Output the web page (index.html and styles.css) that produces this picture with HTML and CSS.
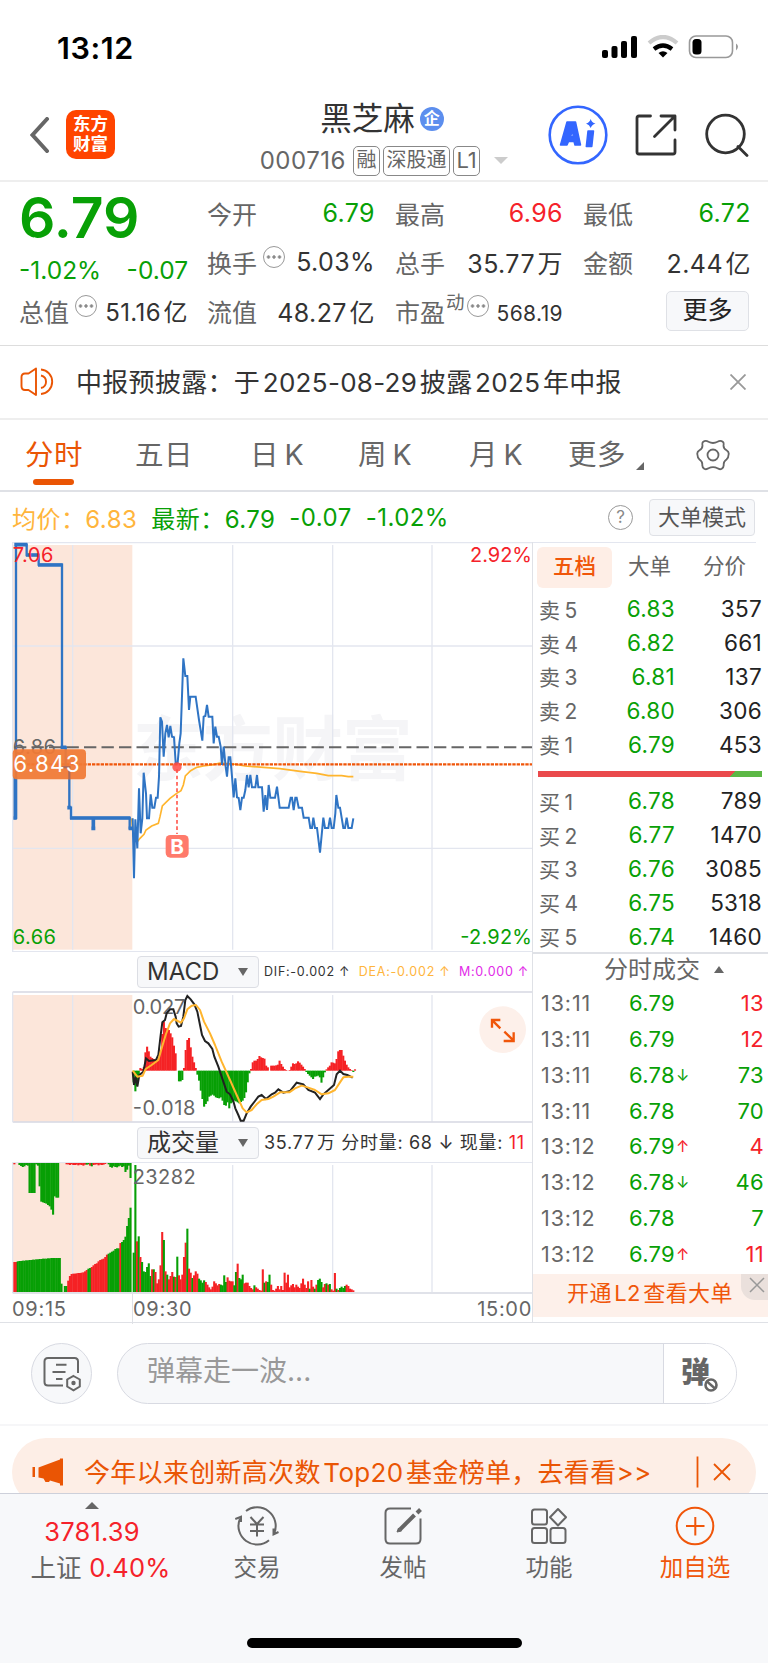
FILE: index.html
```html
<!DOCTYPE html>
<html lang="zh-cn">
<head>
<title>黑芝麻 000716</title>
<meta charset="utf-8">
<link rel="stylesheet" href="styles.css">
<script src="chart.js" defer></script>
</head>
<body>
<div id="wrap">

    <div class="status">
        <span class="time">13:12</span>
        <svg width="140" height="26" viewBox="0 0 140 26">
            <rect x="0" y="15" width="6" height="8" rx="2"/>
            <rect x="9.500" y="11" width="6" height="12" rx="2"/>
            <rect x="19" y="6" width="6" height="17" rx="2"/>
            <rect x="29" y="1" width="6" height="22" rx="2"/>
            <path d="M47 8 Q61 -4 75 8" fill="none" stroke="#ccc" stroke-width="4.200"/>
            <path d="M52 14 Q61 7 70 14" fill="none" stroke="#000" stroke-width="4.200"/>
            <path d="M61 22.500 L56.500 18 Q61 14.500 65.500 18 Z"/>
            <rect x="87.500" y="1" width="43" height="21.500" rx="6.500" fill="none" stroke="#999" stroke-width="1.600"/>
            <rect x="90.500" y="4" width="9" height="15.500" rx="3.500"/>
            <path d="M134 8.500 Q138 11.500 134 15.500Z" fill="#999"/>
        </svg>
    </div>

    <div class="head">
        <div class="head-left">
            <svg width="20" height="36" viewBox="0 0 20 36"><path d="M17 2 L2.500 18 L17 34" fill="none" stroke="#666" stroke-width="4" stroke-linecap="round"/></svg>
            <div class="logo">东方<br>财富</div>
        </div>
        <div class="head-mid">
            <h1>黑芝麻<i>企</i></h1>
            <p><span class="code">000716</span><b>融</b><b>深股通</b><b>L1</b><em></em></p>
        </div>
        <div class="head-right">
            <svg width="60" height="60" viewBox="0 0 60 60">
                <circle cx="30" cy="30" r="28.300" fill="none" stroke="#36f" stroke-width="2.600"/>
                <path fill="#36f" stroke="#36f" stroke-width="1.500" stroke-linejoin="round" fill-rule="evenodd" d="M19 17 H27.500 L32.500 40 H27 L26 36.500 H20.500 L19 40 H12.500Z M22.500 31.500 H25.300 L24.500 25.500Z"/>
                <path fill="#36f" stroke="#36f" stroke-width="1.500" stroke-linejoin="round" d="M40 26 H45.500 L43.800 41.500 H38.300Z"/>
                <path fill="#36f" d="M42.700 14 Q43.800 17.600 47.500 18.500 Q43.800 19.500 42.700 23 Q41.500 19.500 38 18.500 Q41.500 17.600 42.700 14Z"/>
            </svg>
            <svg class="share" width="42" height="42" viewBox="0 0 42 42" fill="none" stroke="#333" stroke-width="2.800" stroke-linecap="round" stroke-linejoin="round">
                <path d="M15.500 2 H4 Q2 2 2 4 V38 Q2 40 4 40 H38 Q40 40 40 38 V26 M26 2 H40 V16 M39 3 L19.500 22.500"/>
            </svg>
            <svg width="44" height="44" viewBox="0 0 44 44" fill="none" stroke="#333" stroke-width="2.800" stroke-linecap="round">
                <circle cx="20.500" cy="21" r="18.800"/><path d="M33 33.500 L42 42.500"/>
            </svg>
        </div>
    </div>

    <div class="quote">
        <div class="now">
            <strong>6.79</strong>
            <p class="green"><span>-1.02%</span><span>-0.07</span></p>
            <p class="total"><label>总值</label><i class="dots"></i><span>51.16&hairsp;亿</span></p>
        </div>
        <ul>
            <li><label>今开</label><span class="green">6.79</span></li>
            <li><label>换手</label><i class="dots"></i><span>5.03%</span></li>
            <li><label>流值</label><span>48.27&hairsp;亿</span></li>
        </ul>
        <ul>
            <li><label>最高</label><span class="red">6.96</span></li>
            <li><label>总手</label><span>35.77&hairsp;万</span></li>
            <li><label>市盈</label><sup>动</sup><i class="dots near"></i><span class="small">568.19</span></li>
        </ul>
        <ul>
            <li><label>最低</label><span class="green">6.72</span></li>
            <li><label>金额</label><span>2.44&hairsp;亿</span></li>
            <li><a class="more">更多</a></li>
        </ul>
    </div>

    <div class="notice">
        <svg width="36" height="30" viewBox="0 0 36 30" fill="none" stroke="#ea5504" stroke-width="1.900" stroke-linejoin="round">
            <path d="M16 1.500 L8.500 6.500 H5 Q1.500 6.500 1.500 10 V19 Q1.500 23 5 23 H8.500 L16 28 Z"/>
            <path d="M21 2.500 A12.300 12.300 0 0 1 21 27 M21 8.500 A6.400 6.400 0 0 1 21 21"/>
        </svg>
        <p>中报预披露：于&hairsp;2025-08-29&hairsp;披露&hairsp;2025&hairsp;年中报</p>
        <svg width="16" height="16" viewBox="0 0 16 16" stroke="#999" stroke-width="1.800"><path d="M.5 .5 L15.500 15.500 M15.500 .5 L.5 15.500"/></svg>
    </div>

    <div class="tabs">
        <a class="active">分时</a>
        <a>五日</a>
        <a>日&thinsp;K</a>
        <a>周&thinsp;K</a>
        <a>月&thinsp;K</a>
        <a class="drop">更多</a>
        <svg width="34" height="34" viewBox="-17 -17 34 34" fill="none" stroke="#666" stroke-width="1.800" stroke-linejoin="round">
            <path d="M-4.500 -13.200 Q0 -10.800 4.500 -13.200 Q7.500 -15 10 -13 Q11 -12.200 10.500 -9.500 Q10.500 -6.500 13.500 -4.800 Q16.500 -3 15.500 0 Q15.500 3 13.500 4.500 Q10.500 6.500 10.700 9.500 Q11 12.500 8.500 14 Q6.500 14.800 4.500 13.300 Q0 11 -4.500 13.300 Q-6.500 14.800 -8.500 14 Q-11 12.500 -10.700 9.500 Q-10.500 6.500 -13.500 4.500 Q-15.500 3 -15.500 0 Q-16.500 -3 -13.500 -4.800 Q-10.500 -6.500 -10.500 -9.500 Q-11 -12.200 -10 -13 Q-7.500 -15 -4.500 -13.200Z"/>
            <circle r="5.500"/>
        </svg>
    </div>

    <div class="info">
        <span class="avg">均价：6.83</span>
        <span class="green">最新：6.79</span>
        <span class="green">-0.07</span>
        <span class="green">-1.02%</span>
        <i class="ask">?</i>
        <a class="mode">大单模式</a>
    </div>

    <div class="main">
        <div class="charts">
            <!-- 所有图表按3倍坐标绘制 -->
            <svg class="price" viewBox="0 36 1599 1230" width="533" height="410">
                <rect x="38" y="45" width="359" height="1214" fill="#fce6da"/>
                <text class="mark" x="398" y="735" textLength="840">东方财富</text>
                <path class="grid" d="M218 45V1259 M698 45V1259 M998 45V1259 M1296 45V1259 M38 348H1599 M38 955H1599"/>
                <path class="grid" d="M38 38H1599 M38 36V1266 M38 1265H1599"/>
                <path d="M42 652H1599" stroke="#666" stroke-width="6" stroke-dasharray="37 15.500"/>
                <polyline fill="none" stroke="#ffb52e" stroke-width="5" points="395,865 400,920 412,935 420,925 432,913 438,900 455,888 475,880 480,860 487,828 510,805 530,790 543,782 550,765 556,738 572,722 590,712 610,708 640,704 660,699 700,702 735,708 790,712 840,716 900,724 950,730 985,737 1025,737 1045,740 1060,740"/>
                <path d="M42 703H1599" stroke="#f0560a" stroke-width="7" stroke-dasharray="10 3"/>
                <path d="M42 864H48V44H80V75H116V104H186V652H197V712H208V833H213V864H280V895V864H389V895H395" fill="none" stroke="#2f74c4" stroke-width="7"/>
                <path d="M43 44H82 M78 75H118 M114 105H188 M182 652H199 M192 712H208 M202 833H214 M210 864H391 M280 864V898 M274 895H286 M386 895H397 M46 740V866 M40 864H50" fill="none" stroke="#2f74c4" stroke-width="11"/>
                <polyline fill="none" stroke="#2f74c4" stroke-width="6" points="398,865 402,1045 406,868 412,955 417,775 422,910 427,865 431,728 438,790 441,865 447,865 452,793 457,833 463,833 468,803 473,803 477,740 481,562 486,575 491,680 496,610 501,585 506,622 511,588 516,620 522,622 527,698 533,698 538,640 542,610 550,385 556,438 562,438 567,540 571,500 587,500 597,570 607,632 611,560 616,558 621,525 626,560 637,560 641,640 646,590 651,620 656,620 662,650 666,705 671,650 677,710 681,740 686,682 691,682 696,740 701,802 706,745 711,802 716,804 721,840 726,803 731,803 736,780 741,735 746,772 751,735 756,772 766,772 771,735 775,772 786,772 791,845 796,795 801,840 806,765 811,803 825,803 831,770 839,833 866,833 872,803 876,803 881,840 886,803 890,803 896,833 906,833 911,863 926,863 931,894 936,894 940,863 945,894 951,894 960,968 970,863 975,894 985,894 990,863 995,894 1001,894 1006,850 1009,795 1015,833 1020,833 1030,894 1035,894 1040,863 1045,894 1055,894 1060,865"/>
                <text x="38" y="97" fill="#f5222a" textLength="122">7.06</text>
                <text x="1596" y="97" fill="#f5222a" text-anchor="end" textLength="186">2.92%</text>
                <text x="38" y="671" fill="#666" textLength="130">6.86</text>
                <text x="38" y="1242" fill="#08a006" textLength="130">6.66</text>
                <text x="1596" y="1242" fill="#08a006" text-anchor="end" textLength="215">-2.92%</text>
                <rect x="38" y="658" width="220" height="90" rx="12" fill="#f07a36" fill-opacity=".94"/>
                <path d="M186 712H208V748" fill="none" stroke="#a86a5c" stroke-width="6"/>
                <text class="tag" x="40" y="726" textLength="199">6.843</text>
                <path d="M531 718V912" stroke="#ff5a50" stroke-width="5" stroke-dasharray="11 8"/>
                <circle cx="531" cy="711" r="14" fill="#ff4a44" fill-opacity=".85"/>
                <rect x="497" y="915" width="69" height="68" rx="14" fill="#ff7a6b"/>
                <text class="buy" x="531.500" y="972" text-anchor="middle">B</text>
            </svg>

            <div class="bar">
                <a>MACD</a>
                <p class="macd"><span>DIF:-0.002 ↑</span><span class="dea">DEA:-0.002 ↑</span><span class="m">M:0.000 ↑</span></p>
            </div>
            <svg id="macd" viewBox="0 138 1599 396" width="533" height="132">
                <rect x="38" y="150" width="359" height="380" fill="#fce6da"/>
                <path class="grid" d="M218 150V530 M698 150V530 M998 150V530 M1296 150V530"/>
                <path class="grid dark" d="M38 141H1599 M38 531H1599"/><path class="grid" d="M38 141V531"/>
                <g id="macdBars"></g>
                <text x="398" y="208" fill="#666" textLength="158">0.027</text>
                <text x="398" y="509" fill="#666" textLength="188">-0.018</text>
                <polyline fill="none" stroke="#222" stroke-width="6" points="398,380 402,420 407,395 412,425 418,390 430,380 438,340 447,348 468,345 475,330 482,270 487,232 495,225 500,205 510,193 520,193 527,215 530,235 536,245 543,243 550,215 556,165 562,153 572,163 583,178 592,200 600,240 606,270 615,288 625,295 637,312 643,335 655,365 665,395 680,440 690,448 700,468 706,490 715,510 722,527 731,527 740,505 752,485 765,468 775,455 785,450 798,462 815,448 825,443 835,433 850,443 870,438 890,413 910,418 925,435 945,443 960,462 970,448 985,435 1002,420 1010,388 1020,377 1030,387 1042,390 1058,398"/>
                <polyline fill="none" stroke="#ffb52e" stroke-width="6" stroke-linejoin="round" points="398,377 412,395 428,392 437,372 455,360 475,345 485,310 497,270 510,235 522,222 533,228 543,233 552,220 562,193 575,182 588,180 600,195 612,230 630,265 645,300 665,350 690,405 710,450 728,490 740,502 755,495 770,478 785,465 805,462 820,455 840,442 868,442 885,430 905,422 925,428 945,435 965,448 985,445 1005,435 1018,415 1030,397 1045,395 1060,395"/>
                <circle cx="1508" cy="254" r="70" fill="#fdf0ea"/>
                <path d="M1476 248V225H1501 M1477 226L1501 250 M1541 262V288H1511 M1540 286L1513 260" fill="none" stroke="#f0560a" stroke-width="7"/>
            </svg>

            <div class="bar">
                <a>成交量</a>
                <p>35.77&hairsp;万 分时量: 68 ↓ 现量: <span class="red">11</span></p>
            </div>
            <svg id="volume" viewBox="0 651 1599 396" width="533" height="132">
                <rect x="38" y="654" width="357" height="388" fill="#fce6da"/>
                <path class="grid" d="M218 660V1041 M698 660V1041 M998 660V1041 M1296 660V1041"/>
                <path class="grid" d="M38 652H1599 M38 652V1044"/><path class="grid dark" d="M38 1044H1599"/>
                <g id="volumeBars"></g>
                <text x="398" y="718" fill="#666" textLength="189">23282</text>
            </svg>
            <div class="axis"><span>09:15</span><span>09:30</span><span>15:00</span></div>
        </div>

        <div class="side">
            <div class="side-tabs"><a class="active">五档</a><a>大单</a><a>分价</a></div>
            <ul class="level">
                <li><label>卖&thinsp;5</label><b>6.83</b><span>357</span></li>
                <li><label>卖&thinsp;4</label><b>6.82</b><span>661</span></li>
                <li><label>卖&thinsp;3</label><b>6.81</b><span>137</span></li>
                <li><label>卖&thinsp;2</label><b>6.80</b><span>306</span></li>
                <li><label>卖&thinsp;1</label><b>6.79</b><span>453</span></li>
            </ul>
            <div class="ratio"></div>
            <ul class="level">
                <li><label>买&thinsp;1</label><b>6.78</b><span>789</span></li>
                <li><label>买&thinsp;2</label><b>6.77</b><span>1470</span></li>
                <li><label>买&thinsp;3</label><b>6.76</b><span>3085</span></li>
                <li><label>买&thinsp;4</label><b>6.75</b><span>5318</span></li>
                <li><label>买&thinsp;5</label><b>6.74</b><span>1460</span></li>
            </ul>
            <h2>分时成交<i></i></h2>
            <ul class="deal">
                <li><label>13:11</label><b>6.79</b><i></i><span class="red">13</span></li>
                <li><label>13:11</label><b>6.79</b><i></i><span class="red">12</span></li>
                <li><label>13:11</label><b>6.78</b><i>↓</i><span>73</span></li>
                <li><label>13:11</label><b>6.78</b><i></i><span>70</span></li>
                <li><label>13:12</label><b>6.79</b><i class="red">↑</i><span class="red">4</span></li>
                <li><label>13:12</label><b>6.78</b><i>↓</i><span>46</span></li>
                <li><label>13:12</label><b>6.78</b><i></i><span>7</span></li>
                <li><label>13:12</label><b>6.79</b><i class="red">↑</i><span class="red">11</span></li>
            </ul>
            <div class="promo">开通&hairsp;L2&hairsp;查看大单
                <i><svg width="16" height="16" viewBox="0 0 16 16" stroke="#999" stroke-width="1.500"><path d="M1 1 L15 15 M15 1 L1 15"/></svg></i>
            </div>
        </div>
    </div>

    <div class="danmu">
        <div class="set">
            <svg width="38" height="36" viewBox="0 0 38 36" fill="none" stroke="#666" stroke-width="2">
                <path d="M20 29.500 H5 Q1.500 29.500 1.500 26 V5.500 Q1.500 2 5 2 H31.500 Q35 2 35 5.500 V17 M13 8.800 H23.500 M9.500 16 H22.500 M13 23 H19.500"/>
                <path d="M30.500 20 L36.800 23.500 V30.500 L30.500 34.300 L24.200 30.500 V23.500Z"/><circle cx="30.500" cy="27" r="1.200" fill="#666"/>
            </svg>
        </div>
        <div class="input"><span>弹幕走一波...</span>
            <a>弹<svg width="16" height="16" viewBox="0 0 16 16"><circle cx="8" cy="8" r="8" fill="#fff"/><circle cx="8" cy="8" r="5.500" fill="none" stroke="#666" stroke-width="2.600"/><path d="M4 4.500L12 11.500" stroke="#666" stroke-width="2.400"/></svg></a>
        </div>
    </div>

    <div class="ad">
        <div>
            <svg width="32" height="28" viewBox="0 0 32 28" fill="#ea5504"><path d="M.5 9H3V19H.5Z M6.500 9.500 L28 1.500 V0.500 H31 V27.500 H28 V25.500 L18 22.500 L17 24 H13.500 L11.500 20.500 L6.500 19.500Z"/></svg>
            <p>今年以来创新高次数&hairsp;Top20&hairsp;基金榜单，去看看&gt;&gt;</p>
            <svg width="36" height="32" viewBox="0 0 36 32" stroke="#ea5504" stroke-width="1.800"><path d="M1.500 .5V31.500 M18 8 L34 24 M34 8 L18 24"/></svg>
        </div>
    </div>

    <div class="foot">
        <div class="index">
            <i></i>
            <p class="red">3781.39</p>
            <p>上证 <span class="red">0.40%</span></p>
        </div>
        <a>
            <svg width="44" height="40" viewBox="0 0 44 40" fill="none" stroke="#666" stroke-width="2">
                <path d="M11 5 A18.600 18.600 0 0 1 39.300 27 M38.500 22.500 V28.500 L43.500 26"/>
                <path d="M34 34.200 A18.600 18.600 0 0 1 4.800 13 M.3 13 L6 10.800 V16"/>
                <path d="M15.500 11 L22 18 L28.500 11 M22 18 V30.500 M15 18.500 H29 M15 25 H29"/>
            </svg>
            交易
        </a>
        <a>
            <svg width="40" height="40" viewBox="0 0 40 40" fill="none" stroke="#666" stroke-width="2">
                <path d="M28 2.500 H7 Q2.500 2.500 2.500 7 V33 Q2.500 37.500 7 37.500 H33 Q37.500 37.500 37.500 33 V12.500"/>
                <path d="M17 23.500 L31.500 9" stroke-width="4"/><path d="M14 26 L15.500 22 L18.500 25Z" fill="#666" stroke-width="1"/>
                <path d="M34 7 L37.500 3.500" stroke-width="4"/>
            </svg>
            发帖
        </a>
        <a>
            <svg width="40" height="40" viewBox="0 0 40 40" fill="none" stroke="#666" stroke-width="2" stroke-linejoin="round">
                <rect x="3" y="3.500" width="15" height="15" rx="2.500"/><rect x="3" y="22" width="15" height="15" rx="2.500"/><rect x="21.500" y="22" width="15" height="15" rx="2.500"/>
                <path d="M29 3 L37 11.300 L29 19.500 L21 11.300Z"/>
            </svg>
            功能
        </a>
        <a class="add">
            <svg width="40" height="40" viewBox="0 0 40 40" fill="none" stroke="#f0560a" stroke-width="2"><circle cx="20" cy="20" r="18.300"/><path d="M11 20H29.500 M20.300 11V29.500"/></svg>
            加自选
        </a>
        <div class="home"></div>
    </div>

</div>
</body>
</html>
```
FILE: styles.css
```css
body,ul,h1,h2,p{margin: 0;padding: 0;}
body{background: #fff;color: #333;font-family: Inter,"Noto Sans CJK SC",sans-serif;}
li{list-style: none;}
i,em{font-style: normal;}
b,h1,h2{font-weight: normal;}
svg{display: block;flex: none;}
.red{color: #f5222a !important;}
.green{color: #08a006 !important;}
#wrap{width: 768px;height: 1663px;overflow: hidden;}

.status{height: 95px;box-sizing: border-box;padding: 35px 26px 0 57px;display: flex;justify-content: space-between;}
.status .time{font-size: 30.500px;line-height: 25px;font-weight: 600;color: #000;letter-spacing: .6px;}

.head{height: 87px;display: grid;grid-template-columns: 1fr auto 1fr;border-bottom: 2px solid #eee;box-sizing: border-box;}
.head-left{display: flex;align-items: center;padding: 0 0 6px 30px;}
.logo{width: 49px;height: 49px;border-radius: 10px;background: #ff4400;color: #fff;font-size: 17.500px;line-height: 20px;font-weight: bold;text-align: center;margin-left: 16px;padding-top: 4px;box-sizing: border-box;}
.head-mid{text-align: center;}
.head-mid h1{font-size: 31.500px;line-height: 44px;padding: 2px 4px 0 0;display: flex;justify-content: center;align-items: center;}
.head-mid h1 i{width: 24px;height: 24px;line-height: 23px;border-radius: 50%;background: #5c8eee;color: #fff;font-size: 16px;font-weight: bold;margin-left: 5px;}
.head-mid p{display: flex;align-items: center;font-size: 20px;color: #666;height: 31px;margin-top: 4px;}
.head-mid .code{font-size: 24px;margin-right: 7px;letter-spacing: .5px;}
.head-mid b{border: 1.500px solid #888;border-radius: 5px;height: 28px;line-height: 27px;padding: 0 2.500px;margin-right: 3px;}
.head-mid b:nth-of-type(3){font-size: 22px;}
.head-mid em{border: 7px solid transparent;border-top-color: #ccc;border-bottom: 0;margin-left: 11px;}
.head-right{display: flex;align-items: center;justify-content: flex-end;padding: 0 19px 6px 0;}
.head-right .share{margin: 0 28px 0 27px;}

.quote{height: 164px;box-sizing: border-box;display: flex;gap: 20px;padding: 6px 15px 0 19px;border-bottom: 1px solid #ddd;font-size: 25px;}
.quote ul,.now{width: 168px;flex: none;}
.now{width: 169px;}
.now strong{display: block;font-size: 57px;line-height: 60px;font-weight: 600;color: #08a006;}
.now .green{display: flex;justify-content: space-between;font-size: 24.500px;line-height: 36px;margin-top: 4px;}
.quote li,.now .total{height: 49px;display: flex;align-items: center;}
.now .total{margin-top: -2px;}
.quote label{color: #666;}
.quote ul{margin-left: -1px;margin-right: 1px;}
.quote li span,.total span{margin-left: auto;white-space: nowrap;letter-spacing: .4px;}
.total span{font-size: 24px;}
.quote .small{font-size: 21px;padding-top: 5px;}
.quote sup{font-size: 18.500px;line-height: 18px;color: #666;margin: -18px 0 0 1px;}
.dots{width: 22px;height: 22px;border: 1.500px solid #999;border-radius: 50%;margin: -10px 0 0 6px;flex: none;background: radial-gradient(circle,#888 1.300px,transparent 1.800px) center/5.500px 5.500px repeat-x;background-clip: content-box;box-sizing: border-box;padding: 0 2px;}
.dots.near{margin-left: 2px;}
.quote .more{width: 81px;height: 38px;border: 1px solid #dfe1e6;border-radius: 5px;background: #f7f8fa;text-align: center;line-height: 36px;margin-left: auto;margin-right: 2px;color: #222;}

.notice{height: 74px;box-sizing: border-box;border-bottom: 2px solid #eee;display: flex;align-items: center;padding: 0 22px 0 20px;font-size: 26px;}
.notice p{flex: 1;margin: -3px 0 0 20px;white-space: nowrap;letter-spacing: .3px;}

.tabs{height: 72px;box-sizing: border-box;border-bottom: 2px solid #dfe1e6;padding-left: 25px;display: grid;grid-template-columns: 110px 115px 108px 111px 99px 128px auto;align-items: center;justify-items: start;font-size: 28.500px;color: #666;}
.tabs a{line-height: 70px;height: 70px;letter-spacing: .4px;}
.tabs .active{color: #ea5504;}
.tabs .active:after{content: "";display: block;width: 41px;height: 6px;border-radius: 3px;background: #ea5504;margin: -11px auto 0;}
.tabs .drop:after{content: "";display: inline-block;border: 4px solid #666;border-left-color: transparent;border-top-color: transparent;margin-left: 10px;vertical-align: -5px;}

.info{height: 50px;box-sizing: border-box;display: flex;align-items: center;padding: 0 13px 0 12px;font-size: 24px;}
.info .avg{color: #ffb53c;}
.info span{margin-right: 14px;letter-spacing: .45px;}
.ask{margin-left: auto;width: 25px;height: 25px;line-height: 23px;box-sizing: border-box;border: 1.500px solid #999;border-radius: 50%;text-align: center;font-size: 17px;color: #888;}
.mode{width: 104px;height: 35px;line-height: 34px;border: 1px solid #dfe1e6;border-radius: 4px;background: #f7f8fa;font-size: 22px;text-align: center;margin-left: 16px;color: #555;}

.main{height: 781px;display: flex;border-bottom: 1px solid #dfe1e6;box-sizing: border-box;}
.charts{width: 532px;flex: none;}
.charts text{font-size: 60px;}
.charts .mark{font-size: 212px;font-weight: bold;fill: #f5f5f7;}
.charts .tag{font-size: 67px;fill: #fff;}
.charts .buy{font-size: 62px;font-weight: bold;fill: #fff;}
.grid{stroke: #e3e6ef;stroke-width: 4;fill: none;}
.grid.dark{stroke: #d6d8e2;}
.r{fill: #f52225;}
.g{fill: #079f05;}
.bar{height: 39px;display: flex;align-items: center;padding-left: 137px;}
.bar a{width: 111px;height: 30px;line-height: 30px;border: 1px solid #dcdee4;border-radius: 4px;background: #f7f8fa;font-size: 24px;padding-left: 9px;margin-right: 5px;display: flex;justify-content: space-between;}
.bar a:after{content: "";border: 5px solid transparent;border-top: 8px solid #666;border-bottom: 0;margin: 11px 10px 0 0;}
.bar p{font-size: 18px;white-space: nowrap;letter-spacing: .68px;margin-top: -3px;}
.bar .macd{font-size: 12.500px;flex: 1;display: flex;justify-content: space-between;padding-right: 3px;letter-spacing: .75px;margin-top: 0;}
.bar .dea{color: #ffb53c;}
.bar .m{color: #e22be8;}
.axis{height: 28px;line-height: 30px;display: grid;grid-template-columns: 120px 1fr auto;padding: 0 0 0 12px;font-size: 20px;letter-spacing: .7px;color: #666;}
.axis span:nth-child(2){border-left: 1px solid #dfe1e6;}

.side{flex: 1;border-left: 1px solid #dfe1e6;position: relative;box-sizing: border-box;}
.side-tabs{display: grid;grid-template-columns: repeat(3,75px);height: 47px;padding: 4px 0 0 4px;width: 223px;border-top: 1px solid #e3e6ef;box-sizing: border-box;font-size: 21.500px;color: #666;text-align: center;line-height: 39px;}
.side-tabs .active{height: 41px;background: #feeee6;border-radius: 6px;color: #f0560a;font-weight: 500;}
.level{padding: 3px 6px 0;}
.level li{height: 33.800px;display: grid;grid-template-columns: 61px 75px 1fr;align-items: center;font-size: 22.500px;letter-spacing: .3px;text-align: right;}
.level label{font-size: 21px;text-align: left;color: #666;}
.level b{color: #08a006;}
.level span{color: #222;}
.ratio{height: 6px;margin: 10px 6px 4px 5px;background: linear-gradient(135deg,#ea4a4c 86%,#5cb845 86%);}
.side h2{height: 36px;border-top: 2px solid #dfe1e6;font-size: 24px;line-height: 32px;padding-left: 71px;color: #666;box-sizing: border-box;margin-top: -1px;}
.side h2 i{display: inline-block;border: 5px solid transparent;border-bottom: 7px solid #666;border-top: 0;margin-left: 14px;vertical-align: 5px;}
.deal{padding: 0 4px 0 8px;height: 289px;margin-top: -3px;}
.deal li{height: 35.900px;display: grid;grid-template-columns: 88px 47px 20px 1fr;align-items: center;font-size: 22px;color: #08a006;letter-spacing: .3px;}
.deal label{color: #666;font-size: 21.500px;letter-spacing: .9px;}
.deal i{font-size: 16px;}
.deal span{text-align: right;}
.promo{height: 43px;line-height: 38px;background: #fdf0ea;color: #f0560a;font-size: 22px;letter-spacing: .4px;padding-left: 34px;position: relative;}
.promo i{position: absolute;right: 0;top: 0;width: 27px;height: 26px;background: #eae0dc;border-bottom-left-radius: 14px;}
.promo i svg{margin: 3px 0 0 8px;}

.danmu{height: 103px;box-sizing: border-box;border-bottom: 2px solid #f6f6f8;display: flex;padding: 20px 31px 0;gap: 25px;}
.set{width: 61px;height: 61px;box-sizing: border-box;border: 1px solid #d8dae2;border-radius: 50%;background: #f7f8fa;display: flex;align-items: center;justify-content: center;}
.input{flex: 1;height: 61px;box-sizing: border-box;border: 1px solid #d8dae2;border-radius: 31px;background: #f7f8fa;overflow: hidden;display: flex;justify-content: space-between;padding-left: 29px;font-size: 28px;line-height: 55px;color: #999;}
.input a{width: 73px;border-left: 1px solid #d8dae2;background: #fff;color: #666;font-weight: 900;font-size: 29px;line-height: 58px;padding-left: 17px;box-sizing: border-box;position: relative;}
.input a svg{position: absolute;left: 39px;top: 33px;}

.ad{height: 67px;overflow: hidden;padding: 12px 12px 0;box-sizing: border-box;}
.ad div{height: 68px;border-radius: 34px;background: #fdeee6;display: flex;align-items: center;padding: 0 24px 0 20px;font-size: 26px;color: #ea5504;box-sizing: border-box;}
.ad p{flex: 1;margin: -4px 0 0 20px;white-space: nowrap;letter-spacing: .3px;}

.foot{height: 172px;border-top: 1px solid #cdd0da;background: #f7f8fa;display: grid;grid-template-columns: 184px repeat(4,146px);box-sizing: border-box;position: relative;color: #666;font-size: 23.500px;text-align: center;}
.foot a svg{margin: 12px auto 1px;}
.foot a{line-height: 42px;}
.foot .add{color: #f0560a;}
.index i{display: block;width: 0;border: 7px solid transparent;border-bottom-color: #666;border-top: 0;margin: 8px auto 5px;}
.index p{line-height: 36px;font-size: 25.500px;letter-spacing: .2px;}
.index p + p{padding-left: 17px;}
.home{position: absolute;left: 247px;bottom: 17px;width: 275px;height: 10px;border-radius: 5px;background: #000;}
```
FILE: chart.js
```js
// 正数红柱，负数绿柱
function drawBars(id, list, x, step, base, dir){
    var html = '';
    for(var i=0;i<list.length;i++){
        if(!list[i]) continue;
        var h = Math.abs(list[i]);
        var y = dir == 'down' ? base : base - h;
        if(dir == 'both') y = list[i] > 0 ? base - h : base;
        html += '<rect class="' + (list[i] > 0 ? 'r' : 'g') + '" x="' + (x + i*step) + '" y="' + y + '" width="' + (step + 1.2) + '" height="' + h + '"/>';
    }
    document.getElementById(id).innerHTML += html;
}

var macd = [-35,-62,-45,-20,8,5,10,55,72,58,42,38,35,32,34,40,60,110,147,128,126,122,112,100,75,52,0,-32,-32,-28,8,62,92,98,70,42,25,8,-12,-30,-60,-85,-108,-100,-92,-78,-75,-72,-75,-80,-82,-83,-80,-90,-103,-105,-95,-113,-98,-95,-90,-92,-95,-98,-94,-90,-82,-65,-35,-8,5,25,30,30,35,44,40,38,36,15,10,0,15,15,15,16,18,30,20,12,5,2,0,2,12,22,20,22,28,24,18,12,5,-4,-10,-15,-20,-25,-18,-17,-15,-20,-36,-20,-5,4,10,15,25,24,22,35,58,62,62,45,30,18,10,5,2,-4,4];

var pre = [90,90,-92,-93,-93,-94,-94,-95,-95,-96,-96,-97,-97,-98,-98,-99,-99,-100,-100,-100,-101,-101,-102,-102,-102,-102,-102,-102,-25,0,-18,-18,34,48,54,55,55,56,57,57,58,59,62,66,-70,-72,75,80,84,86,92,96,98,100,105,112,-115,-118,-121,-124,-129,-131,-131,147,-150,-156,-166,-198,-222,-253];

var rest = [4,0,0,-6,-9,-12,-10,-6,-8,-90,-90,-90,-90,-4,-8,-70,-116,-118,-120,-122,-126,-130,-140,-155,-100,-104,-104,0,0,0,0,4,4,6,4,6,6,5,7,5,6,8,5,-5,-4,8,-10,6,5,4,7,5,6,5,3,0,-4,-12,-14,-10,-12,-13,-10,-8,-12,-10,-27,-20,-8,-45];

var volume = [-118,-381,152,-167,105,-90,-62,-60,-75,-86,-48,68,-68,60,26,38,80,180,-156,62,-52,38,48,60,-46,45,-106,50,38,52,105,148,-190,70,58,-42,50,62,55,-40,-35,-28,-35,30,22,14,8,16,32,26,20,24,-22,-20,-50,-30,44,34,32,32,-20,-60,85,-42,-38,-52,26,28,28,18,12,8,-20,14,10,6,4,68,-28,32,-30,-52,22,6,4,10,18,8,18,6,58,28,52,14,20,24,14,22,16,12,26,40,22,12,32,-10,36,16,-10,22,-36,-40,-30,14,24,-26,22,-24,8,4,57,-10,6,-12,-16,-12,-18,22,18,10,8,5];

drawBars('macdBars', macd, 398, 5.03, 377, 'both');
drawBars('volumeBars', pre, 40, 5.05, 1041);
drawBars('volumeBars', rest, 40, 5.05, 654, 'down');
drawBars('volumeBars', volume, 398, 5.03, 1041);
```
